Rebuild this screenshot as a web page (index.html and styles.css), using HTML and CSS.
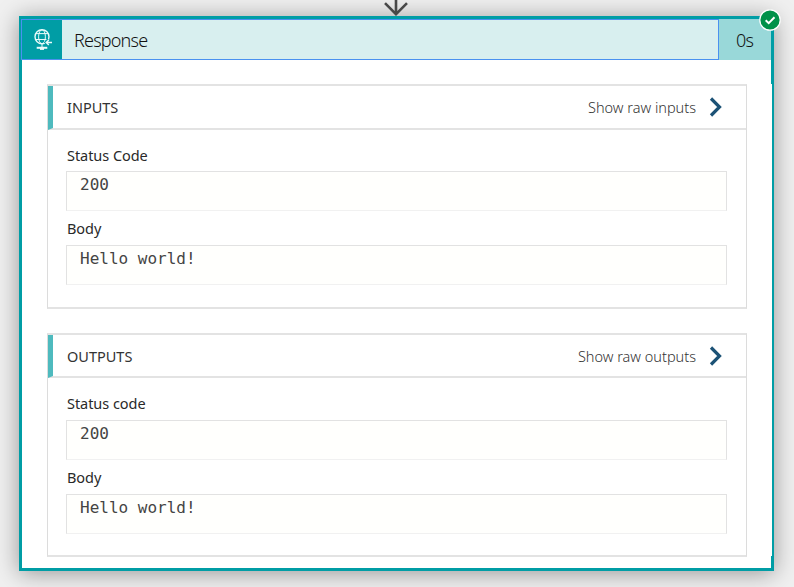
FILE: index.html
```html
<!DOCTYPE html>
<html lang="en">
<head>
<meta charset="utf-8">
<title>Response</title>
<link rel="stylesheet" href="styles.css">
</head>
<body>
<svg class="connector" width="28" height="16" viewBox="0 0 28 16"><path d="M14 0V14M3 3.2L14 14.2L25 3.2" fill="none" stroke="#484848" stroke-width="2.6"/></svg>
<main class="card">
  <header class="card-header">
    <div class="card-title">
      <div class="card-icon">
        <svg width="20" height="24" viewBox="0 0 20 24" fill="none" stroke="#e9fafa" stroke-width="1">
          <circle cx="9" cy="7.8" r="7" stroke-width="1.4"/>
          <ellipse cx="9" cy="7.8" rx="3.4" ry="7"/>
          <path d="M2.8 4.6H15.2M2 10.5H13.5M9 15V18.6"/>
          <path d="M13 13.5H19M15.8 10.7L13 13.5L15.8 16.3" stroke="#009da5" stroke-width="3"/>
          <path d="M13 13.5H19M15.8 10.9L13.2 13.5L15.8 16.1" stroke-width="1.4"/>
          <path d="M3.7 18.8H14.3" stroke-width="2"/>
          <path d="M7 19.4H11" stroke-width="3"/>
        </svg>
      </div>
      <h1>Response</h1>
    </div>
    <div class="duration"><span>0s</span></div>
  </header>
  <svg class="status" width="22" height="22" viewBox="0 0 22 22"><circle cx="11" cy="11" r="10.2" fill="#009149" stroke="#fff" stroke-width="1.2"/><path d="M6.7 11.2L9.7 14.1L15.5 8.3" fill="none" stroke="#fff" stroke-width="2"/></svg>
  <section class="panel inputs">
    <div class="panel-header">
      <h2>INPUTS</h2>
      <a class="raw"><span>Show raw inputs</span><svg width="14" height="20" viewBox="0 0 14 20"><path d="M2 1.5L10.5 10L2 18.5" fill="none" stroke="#1c5276" stroke-width="3.2"/></svg></a>
    </div>
    <div class="panel-body">
      <label>Status Code</label>
      <div class="field">200</div>
      <label>Body</label>
      <div class="field">Hello world!</div>
    </div>
  </section>
  <section class="panel outputs">
    <div class="panel-header">
      <h2>OUTPUTS</h2>
      <a class="raw"><span>Show raw outputs</span><svg width="14" height="20" viewBox="0 0 14 20"><path d="M2 1.5L10.5 10L2 18.5" fill="none" stroke="#1c5276" stroke-width="3.2"/></svg></a>
    </div>
    <div class="panel-body">
      <label>Status code</label>
      <div class="field">200</div>
      <label>Body</label>
      <div class="field">Hello world!</div>
    </div>
  </section>
</main>
</body>
</html>
```

FILE: styles.css
```css
* { box-sizing: border-box; }
body {
  margin: 0;
  height: 587px;
  padding: 16px 20px 16px 19px;
  overflow: hidden;
  background: #f0f0f0;
  font-family: "Noto Sans", "Open Sans", sans-serif;
  color: #333;
}
h1, h2 { margin: 0; font-weight: 400; }
.connector { position: absolute; left: 382px; top: 0; z-index: 2; }
.card {
  position: relative;
  height: 555px;
  border: 3px solid #009da5;
  border-right-width: 2px;
  background: #fff;
  box-shadow: 0 2px 22px rgba(0, 0, 0, .38);
}
.card::before, .card::after {
  content: "";
  position: absolute;
  right: 0;
  width: 1px;
  background: #009da5;
}
.card::before { top: 0; height: 65px; }
.card::after { bottom: 0; height: 12px; }
.card-header { display: flex; height: 41px; margin-right: 1px; }
.card-title {
  display: flex;
  flex: 1;
  margin-left: -1px;
  border: 1px solid #4a91f0;
  background: #d8efef;
}
.card-icon { width: 40px; background: #009da5; padding: 9px 0 0 11px; }
.card-icon svg { display: block; }
h1 {
  padding-left: 12px;
  font-size: 18px;
  line-height: 41px;
  letter-spacing: -.8px;
  font-weight: 350;
  color: #111;
}
.duration {
  width: 52px;
  padding-left: 17px;
  background: #99d8d9;
  font-size: 18px;
  line-height: 43px;
  letter-spacing: -.8px;
  font-weight: 350;
  color: #111;
}
.status { position: absolute; right: -9px; top: -10px; z-index: 2; }
.panel {
  width: 700px;
  height: 225px;
  margin-left: 25px;
  border: 1px solid #dedede;
  border-width: 2px 1px 2px 1px;
  border-color: #e3e3e3 #dcdcdc;
}
.inputs { margin-top: 24px; }
.outputs { height: 224px; margin-top: 24px; }
.panel-header {
  display: flex;
  justify-content: space-between;
  align-items: center;
  height: 44px;
  padding: 0 23px 0 14px;
  border-left: 5px solid #4ebabe;
  border-bottom: 2px solid #e3e3e3;
}
.outputs .panel-header { height: 43px; }
h2 { font-size: 14.5px; letter-spacing: 0; }
.raw { display: flex; align-items: center; gap: 13px; font-size: 14.5px; font-weight: 350; letter-spacing: 0; }
.panel-body { padding: 15px 19px 0 18px; }
label { display: block; height: 26px; padding-left: 1px; font-size: 14.5px; line-height: 20px; letter-spacing: -.05px; color: #292929; }
.outputs label:first-child { height: 27px; }
.field {
  height: 40px;
  padding: 3px 0 0 13px;
  border: 1px solid #e2e2e2;
  border-bottom-color: #f1f1f1;
  background: #fffffd;
  font: 16px/20px "DejaVu Sans Mono", monospace;
  color: #444;
}
.field + label { height: 27px; margin-top: 7px; }
```
